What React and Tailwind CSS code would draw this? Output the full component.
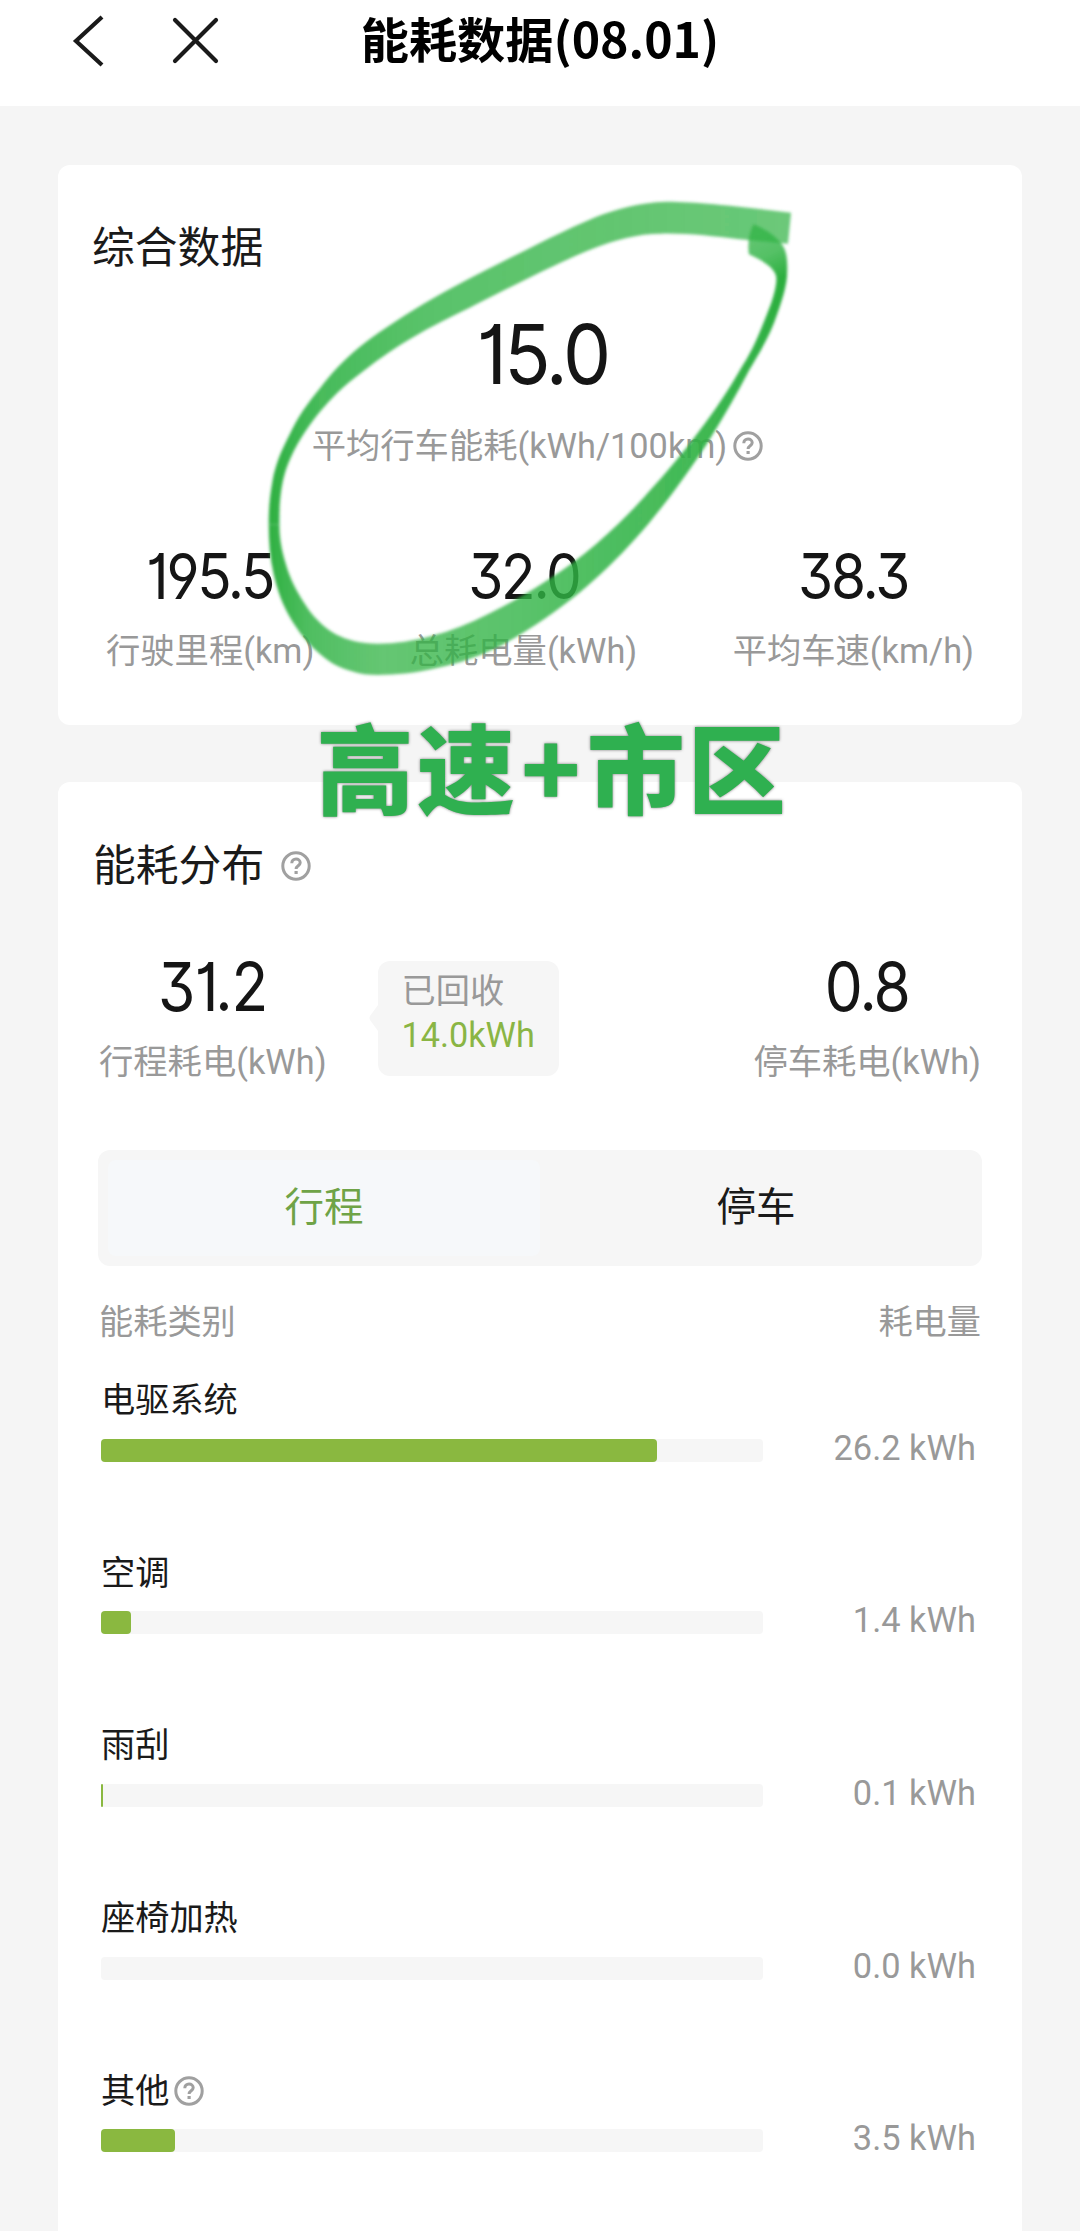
import React from 'react';

const categories = [
    { name: "电驱系统", value: "26.2 kWh", fill: 556 },
    { name: "空调", value: "1.4 kWh", fill: 30 },
    { name: "雨刮", value: "0.1 kWh", fill: 2 },
    { name: "座椅加热", value: "0.0 kWh", fill: 0 },
    { name: "其他", value: "3.5 kWh", fill: 74, help: true },
];

const HelpIcon = ({ className }) => (
    <svg viewBox="0 0 30 30" fill="none" stroke="#a0a0a0" className={`w-[30px] h-[30px] shrink-0 ${className}`}>
        <circle cx="15" cy="15" r="13.2" strokeWidth="3" />
        <path d="M10.8 12.2C10.8 9.6 12.6 8 15 8s4.2 1.5 4.2 3.8c0 2.9-4.1 3.1-4.1 6.2" strokeWidth="3" />
        <path d="M15.1 20v3" strokeWidth="3.2" />
    </svg>
);

const Digits = ({ children, className }) => (
    <div className={`font-['Inter'] [font-feature-settings:'cv01','cv09','ss01'] text-[#151515] ${className}`}>
        {children}
    </div>
);

const Stat = ({ value, label, size = "text-[63px] tracking-[-2.5px]" }) => (
    <div className="flex flex-col items-center">
        <Digits className={`leading-[48px] scale-x-90 ${size}`}>{value}</Digits>
        <p className="mt-[31px] text-[34.3px] leading-10 text-[#999] whitespace-nowrap">{label}</p>
    </div>
);

const Header = () => (
    <header className="relative h-[106px] bg-white flex items-start">
        <svg viewBox="0 0 160 60" fill="none" stroke="#1a1a1a" strokeWidth="4.2" className="w-40 h-[60px] mt-[11px] ml-[68px]">
            <path d="M34 6L8 30l26 24" />
            <path d="M107 9l41 41M148 9l-41 41" strokeLinecap="round" />
        </svg>
        <h1 className="absolute inset-x-0 top-[5px] text-center font-['Noto_Sans_CJK_SC'] font-bold text-[48.2px] leading-[64px] text-black">
            能耗数据(08.01)
        </h1>
    </header>
);

// Freehand marker loop over the summary card
const Marker = () => (
    <svg viewBox="0 0 1568 1560" preserveAspectRatio="none" className="absolute left-[240px] top-[181px] w-[600px] h-[520px]">
        <defs>
            <linearGradient id="upper" gradientUnits="userSpaceOnUse" x1="75" y1="0" x2="1440" y2="0">
                <stop offset="0" stopColor="#2aae3e" stopOpacity="0.98" />
                <stop offset="0.1" stopColor="#2fb244" stopOpacity="0.88" />
                <stop offset="0.3" stopColor="#30b344" stopOpacity="0.8" />
                <stop offset="1" stopColor="#30b344" stopOpacity="0.72" />
            </linearGradient>
            <linearGradient id="lower" gradientUnits="userSpaceOnUse" x1="75" y1="0" x2="1430" y2="0">
                <stop offset="0" stopColor="#2aae3e" stopOpacity="0.98" />
                <stop offset="0.08" stopColor="#2fb244" stopOpacity="0.84" />
                <stop offset="0.22" stopColor="#30b344" stopOpacity="0.75" />
                <stop offset="0.5" stopColor="#30b344" stopOpacity="0.8" />
                <stop offset="0.8" stopColor="#2fb244" stopOpacity="0.9" />
                <stop offset="1" stopColor="#2aae3e" stopOpacity="1" />
            </linearGradient>
            <linearGradient id="tail" gradientUnits="userSpaceOnUse" x1="1345" y1="150" x2="1420" y2="290">
                <stop offset="0" stopColor="#30b344" stopOpacity="0.75" />
                <stop offset="0.5" stopColor="#30b344" stopOpacity="0.82" />
                <stop offset="1" stopColor="#2aae3e" stopOpacity="1" />
            </linearGradient>
            <filter id="soft" x="-5%" y="-5%" width="110%" height="110%">
                <feGaussianBlur stdDeviation="4" />
            </filter>
        </defs>
        <g filter="url(#soft)">
            <path
                fill="url(#upper)"
                d="M1440 95C1330 80 1200 62 1115 62C1040 64 980 86 930 108C850 146 770 195 700 234C620 280 550 322 480 368C410 417 355 458 310 500C270 538 236 580 210 620C175 668 150 710 130 760C105 815 92 855 85 900C78 945 75 980 75 1030L103 1030C102 960 108 910 120 866C138 810 160 766 190 720C220 674 255 630 300 590C350 545 400 502 450 470C500 436 550 408 600 380C655 348 710 316 760 288C820 255 870 226 920 204C980 176 1040 158 1100 158C1170 156 1240 166 1300 174L1432 188Z"
            />
            <path
                fill="url(#lower)"
                d="M75 1030C75 1080 78 1130 88 1180C98 1230 112 1275 135 1318C155 1355 175 1385 200 1410C228 1440 255 1460 290 1470C315 1479 335 1482 360 1482C410 1482 455 1476 500 1465C555 1452 605 1435 650 1411C705 1383 750 1348 800 1310C860 1262 910 1215 960 1160C1012 1103 1055 1048 1100 982C1150 908 1192 840 1230 770C1268 700 1302 632 1332 565C1366 500 1385 460 1400 412C1416 360 1426 325 1429 290L1402 290C1402 335 1380 390 1363 440C1345 490 1330 525 1310 560C1278 625 1240 690 1200 750C1160 812 1115 874 1070 930C1025 990 980 1040 930 1090C890 1130 845 1168 800 1200C752 1236 702 1270 650 1298C600 1328 550 1350 500 1365C455 1380 405 1388 360 1388C315 1388 280 1378 250 1360C215 1336 190 1306 170 1270C148 1232 130 1192 120 1150C108 1105 103 1070 103 1030Z"
            />
            <path
                fill="url(#tail)"
                d="M1429 292C1432 245 1430 208 1415 188C1395 160 1365 140 1342 130C1330 155 1326 190 1330 220C1368 240 1400 262 1402 292Z"
            />
        </g>
    </svg>
);

const Summary = () => (
    <section className="bg-white rounded-xl h-[560px] pt-[59px]">
        <h2 className="pl-[34px] text-[42.8px] leading-[48px] text-[#1a1a1a]">综合数据</h2>
        <div className="mt-[50px] flex flex-col items-center">
            <Digits className="pl-1.5 text-[83px] leading-[64px] tracking-[-3px] scale-x-[.92]">15.0</Digits>
            <p className="mt-10 mr-[5px] flex items-center text-[34.3px] leading-10 text-[#999] whitespace-nowrap">
                平均行车能耗(kWh/100km)
                <HelpIcon className="ml-1.5" />
            </p>
        </div>
        <div className="mt-[86px] px-12 flex justify-between">
            <Stat value="195.5" label="行驶里程(km)" />
            <Stat value="32.0" label="总耗电量(kWh)" />
            <Stat value="38.3" label="平均车速(km/h)" />
        </div>
    </section>
);

const Recovered = () => (
    <div className="relative -mt-0.5 ml-[51px] w-[181px] h-[115px] rounded-xl bg-[#f6f6f6] pl-6 pt-2">
        <svg viewBox="0 0 9 26" className="absolute -left-[9px] top-[44px] w-[9px] h-[26px]">
            <path d="M9 0L1 11q-1 2 0 4l8 11z" fill="#f6f6f6" />
        </svg>
        <p className="text-[34.2px] leading-[44px] text-[#999]">已回收</p>
        <p className="text-[34.2px] leading-[44px] text-[#8ab544]">14.0kWh</p>
    </div>
);

const Distribution = () => (
    <section className="bg-white rounded-t-xl h-[1449px] mt-[57px] pt-[60px]">
        <div className="pl-[35px] flex items-center">
            <h2 className="text-[42.8px] leading-[48px] text-[#1a1a1a]">能耗分布</h2>
            <HelpIcon className="ml-[17px]" />
        </div>

        <div className="mt-[73px] px-[41px] flex items-start">
            <Stat value="31.2" label="行程耗电(kWh)" size="text-[67px] tracking-[-1px]" />
            <Recovered />
            <div className="ml-auto">
                <Stat value="0.8" label="停车耗电(kWh)" size="text-[67px] tracking-[-2px]" />
            </div>
        </div>

        <div className="mt-[68px] mx-10 h-[116px] rounded-xl bg-[#f6f6f6] p-2.5 flex text-[39.5px]">
            <div className="flex-1 rounded-lg bg-[#f6f8fa] text-[#6fa347] flex items-center justify-center">行程</div>
            <div className="flex-1 text-[#1a1a1a] flex items-center justify-center">停车</div>
        </div>

        <div className="mt-9 px-[41px] flex justify-between text-[34.2px] leading-10 text-[#999]">
            <span>能耗类别</span>
            <span>耗电量</span>
        </div>

        <div className="mt-[38px] pl-[43px] pr-[46px]">
            {categories.map((item) => (
                <div key={item.name} className="h-[172.7px]">
                    <div className="flex items-center text-[34.2px] leading-10 text-[#1a1a1a]">
                        {item.name}
                        {item.help && <HelpIcon className="ml-[5px]" />}
                    </div>
                    <div className="mt-[18px] h-6 flex items-center justify-between">
                        <div className="w-[662px] h-[23px] rounded-sm bg-[#f6f6f6]">
                            <div className="h-full rounded-sm bg-[#8ab840]" style={{ width: item.fill }} />
                        </div>
                        <span className="pb-[5px] text-[34.4px] leading-10 text-[#999] whitespace-nowrap">{item.value}</span>
                    </div>
                </div>
            ))}
        </div>
    </section>
);

const App = () => {
    return (
        <div className="relative w-[1080px] h-[2231px] overflow-hidden bg-[#f5f5f5] font-['Roboto','Noto_Sans_CJK_SC',sans-serif]">
            <Header />
            <main className="px-[58px] pt-[59px]">
                <Summary />
                <Distribution />
            </main>
            <Marker />
            <p className="absolute left-[316px] top-[704px] font-['Noto_Sans_CJK_SC'] font-black text-[98px] leading-[120px] tracking-[3px] text-[#2fb050] whitespace-nowrap [text-shadow:0_0_3px_#777]">
                高速<span className="mx-[3px]">+</span>市区
            </p>
        </div>
    );
};

export default App;
